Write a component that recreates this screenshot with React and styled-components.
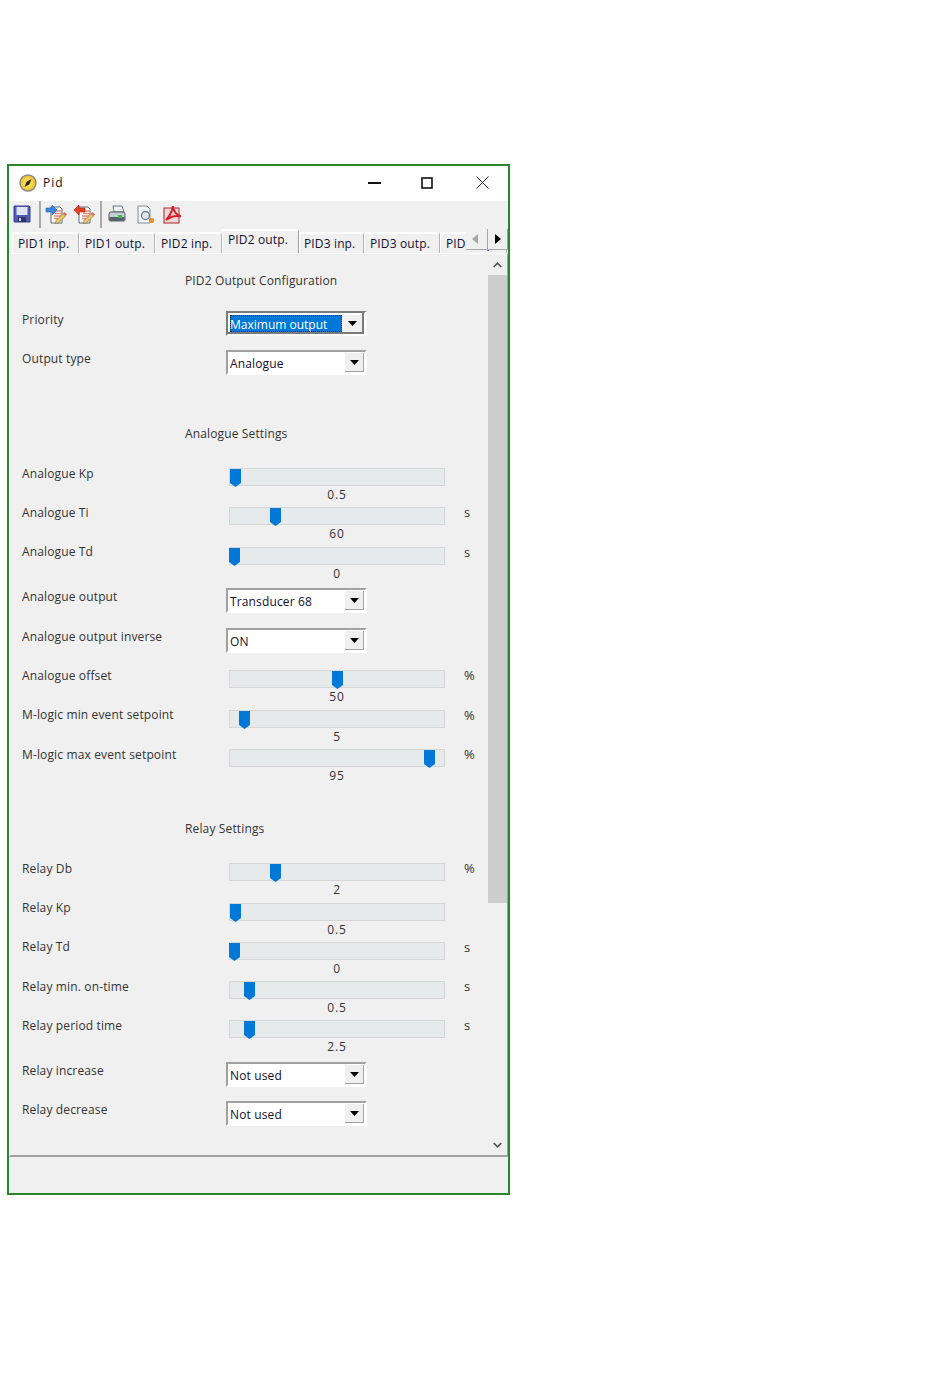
import React from "react";
import styled, { createGlobalStyle } from "styled-components";

const GlobalStyle = createGlobalStyle`
  html, body {
    margin: 0;
    padding: 0;
    background: #fff;
  }
  body {
    font-family: "Open Sans", "Liberation Sans", sans-serif;
    font-size: 12px;
    letter-spacing: 0.14px;
    color: #222;
  }
`;

const tabs = [
  { label: "PID1 inp.", width: 67 },
  { label: "PID1 outp.", width: 76 },
  { label: "PID2 inp.", width: 67 },
  { label: "PID2 outp.", width: 77, active: true },
  { label: "PID3 inp.", width: 65, pad: 4 },
  { label: "PID3 outp.", width: 76 },
  { label: "PID4 inp.", width: 67 },
];

const analogueRows = [
  { type: "slider", label: "Analogue Kp", value: "0.5", thumb: 1, gap: 26 },
  { type: "slider", label: "Analogue Ti", value: "60", thumb: 41, unit: "s", gap: 5 },
  { type: "slider", label: "Analogue Td", value: "0", thumb: 0, unit: "s", gap: 6, lift: 1 },
  { type: "select", label: "Analogue output", value: "Transducer 68", gap: 7 },
  { type: "select", label: "Analogue output inverse", value: "ON", gap: 15 },
  { type: "slider", label: "Analogue offset", value: "50", thumb: 103, unit: "%", gap: 17 },
  { type: "slider", label: "M-logic min event setpoint", value: "5", thumb: 10, unit: "%", gap: 6, lift: 1 },
  { type: "slider", label: "M-logic max event setpoint", value: "95", thumb: 195, unit: "%", gap: 5 },
];

const relayRows = [
  { type: "slider", label: "Relay Db", value: "2", thumb: 41, unit: "%", gap: 26 },
  { type: "slider", label: "Relay Kp", value: "0.5", thumb: 1, gap: 6, lift: 1 },
  { type: "slider", label: "Relay Td", value: "0", thumb: 0, unit: "s", gap: 5, lift: 1 },
  { type: "slider", label: "Relay min. on-time", value: "0.5", thumb: 15, unit: "s", gap: 5 },
  { type: "slider", label: "Relay period time", value: "2.5", thumb: 15, unit: "s", gap: 5 },
  { type: "select", label: "Relay increase", value: "Not used", gap: 8 },
  { type: "select", label: "Relay decrease", value: "Not used", gap: 14 },
];

const Page = styled.div`
  padding: 164px 0 0 7px;
  height: 1223px;
  overflow: hidden;
`;

const Window = styled.div`
  width: 503px;
  height: 1031px;
  box-sizing: border-box;
  border: 2px solid #2a862a;
  background: #f0f0f0;
  display: flex;
  flex-direction: column;
`;

const TitleBar = styled.div`
  height: 35px;
  flex: none;
  box-sizing: border-box;
  background: #fff;
  display: flex;
  align-items: center;
  padding: 0 0 2px 10px;
`;

const AppTitle = styled.span`
  margin-left: 6px;
  font-size: 12px;
  letter-spacing: 1px;
  color: #111;
`;

const WindowButtons = styled.div`
  margin-left: auto;
  margin-right: -1px;
  display: flex;
  align-items: center;
`;

const WindowButton = styled.div`
  width: 54px;
  height: 33px;
  box-sizing: border-box;
  padding-right: ${(p) => p.$nudge || 0}px;
  display: flex;
  align-items: center;
  justify-content: center;
`;

const Toolbar = styled.div`
  height: 28px;
  flex: none;
  box-sizing: border-box;
  padding-bottom: 2px;
  display: flex;
  align-items: center;
`;

const ToolIcon = styled.div`
  display: flex;
  margin-left: ${(p) => p.$left}px;
`;

const ToolSeparator = styled.div`
  width: 2px;
  height: 27px;
  align-self: flex-start;
  background: #a9a9a9;
  margin-left: ${(p) => p.$left}px;
`;

const TabStrip = styled.div`
  position: relative;
  height: 25px;
  flex: none;
  display: flex;
  align-items: flex-end;
  padding-left: 3px;
  overflow: hidden;
  box-sizing: border-box;
  border-bottom: 1px solid #fff;
`;

const Tab = styled.div`
  flex: none;
  width: ${(p) => p.$width}px;
  height: ${(p) => (p.$active ? 25 : 21)}px;
  margin-bottom: ${(p) => (p.$active ? -1 : 0)}px;
  box-sizing: border-box;
  padding: ${(p) => (p.$active ? "0" : "1px")} 0 0 ${(p) => p.$pad || 5}px;
  background: #f0f0f0;
  border-top: 2px solid #fff;
  border-left: 1px solid #fff;
  border-right: 1px solid ${(p) => (p.$active ? "#a0a0a0" : "#b4b4b4")};
  color: #101030;
  font-size: 12px;
  line-height: 17px;
  white-space: nowrap;
  overflow: hidden;
`;

const TabSpinner = styled.div`
  position: absolute;
  top: 0;
  right: 0;
  width: 42px;
  height: 21px;
  box-sizing: border-box;
  background: #f0f0f0;
  border-bottom: 1px solid #a8a8a8;
  border-right: 1px solid #a0a0a0;
  display: flex;
`;

const SpinnerButton = styled.div`
  width: ${(p) => p.$width}px;
  flex: none;
  box-sizing: border-box;
  display: flex;
  align-items: center;
  justify-content: center;
  padding-right: ${(p) => p.$shift || 0}px;
  & + & {
    border-left: 1px solid #a8a8a8;
  }
`;

const Body = styled.div`
  flex: 1;
  min-height: 0;
  display: flex;
  border-left: 1px solid #fff;
  border-bottom: 2px solid #a0a0a0;
  border-right: 1px solid #a0a0a0;
`;

const Content = styled.div`
  flex: 1;
  min-width: 0;
  padding: 19px 0 0 12px;
  color: #333;
`;

const SectionTitle = styled.div`
  height: 16px;
  line-height: 16px;
  padding-left: 163px;
  margin-top: ${(p) => p.$top}px;
  white-space: nowrap;
`;

const Row = styled.div`
  display: grid;
  grid-template-columns: 204px 217px 1fr;
  height: ${(p) => p.$height}px;
  margin-top: ${(p) => p.$top || 0}px;
`;

const Label = styled.div`
  line-height: 16px;
  margin-top: ${(p) => p.$offset}px;
  white-space: nowrap;
`;

const Unit = styled.div`
  padding-left: 21px;
  line-height: 16px;
  margin-top: -3px;
  font-size: 13px;
`;

const SliderBox = styled.div`
  display: flex;
  flex-direction: column;
  align-items: center;
  margin-left: 3px;
  width: 216px;
`;

const Track = styled.div`
  position: relative;
  width: 100%;
  height: 18px;
  flex: none;
  box-sizing: border-box;
  background: #e7eaea;
  border: 1px solid #d6d6d6;
`;

const Thumb = styled.svg`
  position: absolute;
  top: 0;
  left: ${(p) => p.$left - 1}px;
`;

const SliderValue = styled.div`
  line-height: 16px;
  margin-top: 1px;
  font-size: 12px;
  letter-spacing: 0.8px;
`;

const SelectBox = styled.div`
  width: 141px;
  height: 25px;
  box-sizing: border-box;
  background: #fff;
  border-top: 2px solid ${(p) => (p.$focus ? "#7a7a7a" : "#a0a0a0")};
  border-left: 2px solid ${(p) => (p.$focus ? "#7a7a7a" : "#a0a0a0")};
  border-right: ${(p) => (p.$focus ? 3 : 2)}px solid #fff;
  border-bottom: 2px solid #fff;
  display: flex;
  padding: ${(p) => (p.$focus ? "2px" : "1px")};
  box-shadow: ${(p) => (p.$focus ? "inset -2px -2px 0 #7a7a7a" : "none")};
`;

const SelectText = styled.div`
  flex: 1;
  padding: ${(p) => (p.$focus ? "2px 0 0 0" : "1px 0 0 1px")};
  line-height: ${(p) => (p.$focus ? 15 : 19)}px;
  letter-spacing: ${(p) => (p.$focus ? 0 : 0.14)}px;
  margin-right: ${(p) => (p.$focus ? 1 : 0)}px;
  color: ${(p) => (p.$focus ? "#fff" : "#101030")};
  background: ${(p) => (p.$focus ? "#0078d7" : "transparent")};
  outline: ${(p) => (p.$focus ? "1px dotted #222" : "none")};
  outline-offset: -1px;
`;

const SelectButton = styled.div`
  width: 19px;
  flex: none;
  box-sizing: border-box;
  background: #f0f0f0;
  border-right: ${(p) => (p.$focus ? "none" : "1px solid #a0a0a0")};
  border-bottom: ${(p) => (p.$focus ? "none" : "1px solid #a0a0a0")};
  display: flex;
  align-items: center;
  justify-content: center;
`;

const ScrollBar = styled.div`
  width: 19px;
  flex: none;
  display: flex;
  flex-direction: column;
  align-items: stretch;
`;

const ScrollArrow = styled.div`
  height: 21px;
  flex: none;
  display: flex;
  align-items: center;
  justify-content: center;
`;

const ScrollThumb = styled.div`
  height: 628px;
  flex: none;
  background: #cdcdcd;
`;

const ScrollRest = styled.div`
  flex: 1;
`;

const StatusBar = styled.div`
  height: 36px;
  flex: none;
`;

const Caret = () => (
  <svg width="9" height="5" viewBox="0 0 9 5">
    <path d="M0 0h9L4.5 5z" fill="#000" />
  </svg>
);

const Compass = () => (
  <svg width="18" height="18" viewBox="0 0 18 18">
    <circle cx="9" cy="9" r="8" fill="#f2c53a" stroke="#8a8a7a" strokeWidth="1.4" />
    <circle cx="9" cy="9" r="5.5" fill="#f8d850" />
    <path d="M12.5 5 10.4 10.2 5.5 13 7.6 7.8z" fill="#2a2a1a" />
  </svg>
);

const SaveIcon = () => (
  <svg width="18" height="18" viewBox="0 0 18 18">
    <path d="M1 1h15l1 1v15H1z" fill="#5058b8" stroke="#3c4290" />
    <rect x="3.5" y="2" width="11" height="8" fill="#dfe3f6" />
    <rect x="5" y="12" width="8" height="5" fill="#30345e" />
    <rect x="6" y="13" width="2" height="3" fill="#c8cce8" />
  </svg>
);

// page with a coloured arrow and a pencil, used for the two transfer buttons
const DocArrowIcon = ({ color, dark, arrow }) => (
  <svg width="22" height="20" viewBox="0 0 22 20">
    <path d="M6 3h9l2 2v14H6z" fill="#fff" stroke="#5a6878" />
    <path d="M10 7h7M10 9.5h7M9 12h7M9 14.5h4" stroke="#e08a80" strokeWidth="1.3" />
    <path d={arrow} fill={color} stroke={dark} strokeWidth="0.6" />
    <path d="M11 16.5 18 9.5l2.5 2.5-7 7-3 .5z" fill="#ecc860" stroke="#80704a" strokeWidth="0.7" />
    <path d="M18 9.5 19.5 8 22 10.5 20.5 12z" fill="#e06a50" />
  </svg>
);

const PrinterIcon = () => (
  <svg width="18" height="18" viewBox="0 0 18 18">
    <path d="M5 1h9l2 6H6z" fill="#f2f3f5" stroke="#6e7880" />
    <path d="M2 7h14l1 2v6H1V9z" fill="#c4ced6" stroke="#4e5a64" />
    <rect x="1.5" y="12" width="15" height="4.5" fill="#566470" />
    <rect x="10" y="10" width="4" height="3" fill="#38c038" />
  </svg>
);

const PreviewIcon = () => (
  <svg width="19" height="19" viewBox="0 0 19 19">
    <path d="M2 1h9l3 3v14H2z" fill="#f4f6f8" stroke="#7c8ca0" />
    <circle cx="9.5" cy="10.5" r="4" fill="#dfe8ee" stroke="#6e7e8a" strokeWidth="1.3" />
    <circle cx="15.5" cy="15.5" r="2.6" fill="#e8902a" />
  </svg>
);

const PdfIcon = () => (
  <svg width="19" height="19" viewBox="0 0 19 19">
    <rect x="1" y="3" width="15" height="15" fill="#ead8d8" stroke="#a8242a" />
    <path
      d="M10 1c-1 6-3 10-7 14 4-3 9-5 15-3.5-4-1-8-5-8-10.5"
      fill="none"
      stroke="#d8202a"
      strokeWidth="2"
    />
  </svg>
);

function Slider({ row }) {
  return (
    <SliderBox>
      <Track>
        <Thumb $left={row.thumb} width="11" height="18" viewBox="0 0 11 18">
          <path d="M0 0h11v14l-5.5 4L0 14z" fill="#0078d7" />
        </Thumb>
      </Track>
      <SliderValue>{row.value}</SliderValue>
    </SliderBox>
  );
}

function Select({ value, focus }) {
  return (
    <SelectBox $focus={focus}>
      <SelectText $focus={focus}>{value}</SelectText>
      <SelectButton $focus={focus}>
        <Caret />
      </SelectButton>
    </SelectBox>
  );
}

function SettingRow({ row }) {
  if (row.type === "select") {
    return (
      <Row $height={25} $top={row.gap}>
        <Label $offset={1}>{row.label}</Label>
        <Select value={row.value} />
      </Row>
    );
  }
  return (
    <Row $height={34} $top={row.gap}>
      <Label $offset={-2 - (row.lift || 0)}>{row.label}</Label>
      <Slider row={row} />
      <Unit>{row.unit}</Unit>
    </Row>
  );
}

export default function App() {
  return (
    <Page>
      <GlobalStyle />
      <Window>
        <TitleBar>
          <Compass />
          <AppTitle>Pid</AppTitle>
          <WindowButtons>
            <WindowButton>
              <svg width="13" height="2" viewBox="0 0 13 2">
                <rect width="13" height="2" fill="#111" />
              </svg>
            </WindowButton>
            <WindowButton $nudge={2}>
              <svg width="12" height="12" viewBox="0 0 12 12">
                <rect x="1" y="1" width="10" height="10" fill="none" stroke="#111" strokeWidth="1.6" />
              </svg>
            </WindowButton>
            <WindowButton>
              <svg width="13" height="13" viewBox="0 0 13 13">
                <path d="M.5.5l12 12M12.5.5l-12 12" stroke="#222" strokeWidth="1" />
              </svg>
            </WindowButton>
          </WindowButtons>
        </TitleBar>
        <Toolbar>
          <ToolIcon $left={4}>
            <SaveIcon />
          </ToolIcon>
          <ToolSeparator $left={8} />
          <ToolIcon $left={4}>
            <DocArrowIcon color="#3f86e0" dark="#2060b0" arrow="M1 4h6V1l5 5-5 5V8H1z" />
          </ToolIcon>
          <ToolIcon $left={6}>
            <DocArrowIcon color="#e84020" dark="#b02010" arrow="M12 4H6V1L1 6l5 5V8h6z" />
          </ToolIcon>
          <ToolSeparator $left={5} />
          <ToolIcon $left={6}>
            <PrinterIcon />
          </ToolIcon>
          <ToolIcon $left={10}>
            <PreviewIcon />
          </ToolIcon>
          <ToolIcon $left={8}>
            <PdfIcon />
          </ToolIcon>
        </Toolbar>
        <TabStrip>
          {tabs.map((t) => (
            <Tab key={t.label} $width={t.width} $active={t.active} $pad={t.pad}>
              {t.label}
            </Tab>
          ))}
          <TabSpinner>
            <SpinnerButton $width={21} $shift={4}>
              <svg width="6" height="10" viewBox="0 0 6 10">
                <path d="M6 0v10L0 5z" fill="#a8a8a8" />
              </svg>
            </SpinnerButton>
            <SpinnerButton $width={20}>
              <svg width="6" height="10" viewBox="0 0 6 10">
                <path d="M0 0v10l6-5z" fill="#000" />
              </svg>
            </SpinnerButton>
          </TabSpinner>
        </TabStrip>
        <Body>
          <Content>
            <SectionTitle $top={0}>PID2 Output Configuration</SectionTitle>
            <Row $height={25} $top={22}>
              <Label $offset={1}>Priority</Label>
              <Select value="Maximum output" focus />
            </Row>
            <Row $height={25} $top={14}>
              <Label $offset={1}>Output type</Label>
              <Select value="Analogue" />
            </Row>
            <SectionTitle $top={51}>Analogue Settings</SectionTitle>
            {analogueRows.map((r) => (
              <SettingRow key={r.label} row={r} />
            ))}
            <SectionTitle $top={38}>Relay Settings</SectionTitle>
            {relayRows.map((r) => (
              <SettingRow key={r.label} row={r} />
            ))}
          </Content>
          <ScrollBar>
            <ScrollArrow>
              <svg width="9" height="6" viewBox="0 0 9 6">
                <path d="M.7 5 4.5 1.2 8.3 5" fill="none" stroke="#505050" strokeWidth="1.6" />
              </svg>
            </ScrollArrow>
            <ScrollThumb />
            <ScrollRest />
            <ScrollArrow>
              <svg width="9" height="6" viewBox="0 0 9 6">
                <path d="M.7 1 4.5 4.8 8.3 1" fill="none" stroke="#505050" strokeWidth="1.6" />
              </svg>
            </ScrollArrow>
          </ScrollBar>
        </Body>
        <StatusBar />
      </Window>
    </Page>
  );
}
